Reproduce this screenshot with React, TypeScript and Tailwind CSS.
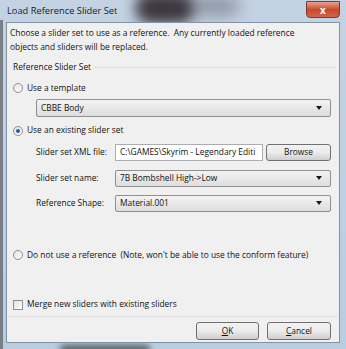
import React from "react";

const font = { fontFamily: '"Open Sans", "Noto Sans", sans-serif' };

function Arrow() {
  return (
    <svg width="6" height="4" viewBox="0 0 6 4" className="shrink-0">
      <path d="M0 0 H6 L3 4 Z" fill="#1a1a1a" />
    </svg>
  );
}

function Combo({ text, className }: { text: string; className: string }) {
  return (
    <div
      className={`flex items-center justify-between rounded-[2px] border border-[#8e8f8f] bg-gradient-to-b from-[#f3f3f3] to-[#dddddd] pl-[4px] pr-[8px] text-[#111] ${className}`}
    >
      <span>{text}</span>
      <Arrow />
    </div>
  );
}

function Radio({ checked }: { checked?: boolean }) {
  return (
    <div className="flex h-[10px] w-[10px] shrink-0 items-center justify-center rounded-full border border-[#8f8f8f] bg-gradient-to-br from-[#e2e2e2] to-[#ffffff]">
      {checked && <div className="h-[4px] w-[4px] rounded-full bg-[#1d5ea8]" />}
    </div>
  );
}

function Button({ children, className }: { children: React.ReactNode; className: string }) {
  return (
    <div
      className={`flex items-center justify-center rounded-[3px] border border-[#707070] bg-gradient-to-b from-[#f2f2f2] via-[#ebebeb] to-[#cfcfcf] text-[#111] ${className}`}
    >
      {children}
    </div>
  );
}

export default function App() {
  return (
    <div
      style={font}
      className="relative h-[349px] w-[346px] overflow-hidden bg-gradient-to-b from-[#c4d3e3] to-[#b9cde0] text-[#111]"
    >
      {/* blurred background on glass */}
      <div className="absolute left-[135px] top-[-8px] h-[32px] w-[60px] rounded-full bg-[#2e272d] opacity-90 blur-[7px]" />
      <div className="absolute left-[190px] top-[-4px] h-[20px] w-[50px] rounded-full bg-[#5b5a66] opacity-50 blur-[8px]" />
      <div className="absolute left-0 top-[20px] h-[330px] w-[3px] bg-[#4a4a4a] opacity-60" />
      <div className="absolute left-[60px] bottom-[-4px] h-[8px] w-[90px] rounded-full bg-[#2a2a2a] opacity-70 blur-[3px]" />

      <div className="relative flex h-full flex-col">
        {/* title bar */}
        <div className="flex h-[22px] items-center justify-between pl-[7px] pr-[6px]">
          <span className="text-[9.3px] text-[#1a1a1a]">Load Reference Slider Set</span>
          <div className="mb-[3px] flex h-[17px] w-[34px] items-center justify-center rounded-b-[4px] border border-[#7a3a2e] bg-gradient-to-b from-[#e8a393] via-[#c9492f] to-[#d06447]">
            <span className="text-[10px] font-bold leading-none text-white">x</span>
          </div>
        </div>

        {/* client area */}
        <div className="mx-[6px] mb-[6px] flex flex-1 flex-col border border-[#8393a6] bg-[#f0f0f0] text-[8.4px]">
          <div className="ml-[3px] mt-[3px] leading-[14px]">
            <div>Choose a slider set to use as a reference.&nbsp; Any currently loaded reference</div>
            <div>objects and sliders will be replaced.</div>
          </div>

          <div className="ml-[6px] mr-[4px] mt-[7px] flex items-center gap-[4px]">
            <span>Reference Slider Set</span>
            <div className="h-px flex-1 bg-[#d5dfe5]" />
          </div>

          <div className="ml-[6px] mt-[8px] flex items-center gap-[4px]">
            <Radio />
            <span>Use a template</span>
          </div>

          <Combo text="CBBE Body" className="ml-[29px] mr-[8px] mt-[5px] h-[18px]" />

          <div className="ml-[6px] mt-[7px] flex items-center gap-[4px]">
            <Radio checked />
            <span>Use an existing slider set</span>
          </div>

          <div className="ml-[29px] mr-[8px] mt-[7px] flex items-center">
            <span className="w-[79px]">Slider set XML file:</span>
            <div className="flex h-[17px] w-[148px] items-center overflow-hidden whitespace-nowrap border border-[#abadb3] bg-white pl-[4px]">
              C:\GAMES\Skyrim - Legendary Editi
            </div>
            <Button className="ml-[3px] h-[17px] flex-1">Browse</Button>
          </div>

          <div className="ml-[29px] mr-[8px] mt-[9px] flex items-center">
            <span className="w-[79px]">Slider set name:</span>
            <Combo text="7B Bombshell High->Low" className="h-[17px] flex-1" />
          </div>

          <div className="ml-[29px] mr-[8px] mt-[8px] flex items-center">
            <span className="w-[79px]">Reference Shape:</span>
            <Combo text="Material.001" className="h-[17px] flex-1" />
          </div>

          <div className="ml-[6px] mt-[37px] flex items-center gap-[4px]">
            <Radio />
            <span>Do not use a reference&nbsp; (Note, won't be able to use the conform feature)</span>
          </div>

          <div className="ml-[6px] mt-[37px] flex items-center gap-[4px]">
            <div className="h-[10px] w-[10px] border border-[#8f8f8f] bg-gradient-to-br from-[#e0e0e0] to-white" />
            <span>Merge new sliders with existing sliders</span>
          </div>

          <div className="mx-[1px] mt-[5px] h-px bg-[#dfdfdf]" />

          <div className="mr-[8px] mt-[5px] flex justify-end gap-[8px]">
            <Button className="h-[18px] w-[63px]">
              <span className="underline">O</span>K
            </Button>
            <Button className="h-[18px] w-[64px]">
              <span className="underline">C</span>ancel
            </Button>
          </div>
        </div>
      </div>
    </div>
  );
}
